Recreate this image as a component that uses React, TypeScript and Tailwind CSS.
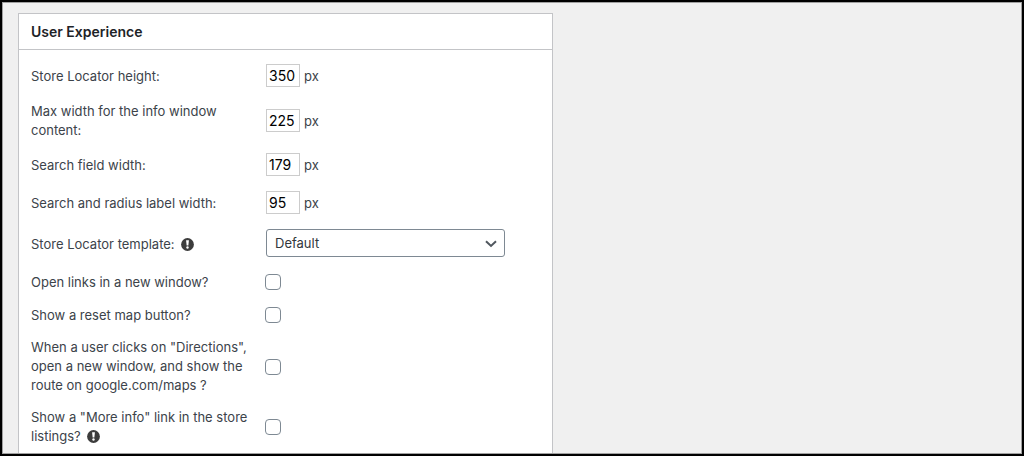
import { useState } from "react";
import type { ReactNode } from "react";

const sizeFields = [
  { id: "height", label: "Store Locator height:", value: "350" },
  { id: "infowindow_width", label: "Max width for the info window content:", value: "225" },
  { id: "search_width", label: "Search field width:", value: "179" },
  { id: "label_width", label: "Search and radius label width:", value: "95" },
];

const toggleFields = [
  { id: "new_window", label: "Open links in a new window?" },
  { id: "reset_map", label: "Show a reset map button?" },
  {
    id: "direction_redirect",
    label: 'When a user clicks on "Directions", open a new window, and show the route on google.com/maps ?',
  },
  { id: "more_info", label: 'Show a "More info" link in the store listings?', info: true },
];

const InfoIcon = () => (
  <svg className="inline-block w-[13px] h-[13px] ml-1.5 align-[-2px]" viewBox="0 0 12 12" aria-hidden="true">
    <circle cx="6" cy="6" r="5.9" fill="#3c3c3c" />
    <path d="M4.7 2.1h2.6L6.8 7H5.2z" fill="#fff" />
    <circle cx="6" cy="8.8" r="1.1" fill="#fff" />
  </svg>
);

type RowProps = {
  id: string;
  label: string;
  info?: boolean;
  children: ReactNode;
};

const Row = ({ id, label, info, children }: RowProps) => (
  <div className="flex items-center min-h-5">
    <label htmlFor={id} className="w-56 mr-[10px] shrink-0">
      {label}
      {info && <InfoIcon />}
    </label>
    {children}
  </div>
);

const App = () => {
  const [sizes, setSizes] = useState(sizeFields.map((f) => f.value));

  return (
    <div className="h-screen overflow-hidden border-2 border-black bg-[#f0f0f0] font-['Inter',sans-serif] text-[13px] leading-[19px] text-[#3c434a]">
      <main className="h-full overflow-hidden border border-[#a0a0a0] px-[15px] pt-[10px]">
        <section className="max-w-[535px] border border-[#c3c4c7] bg-white">
          <h2 className="border-b border-[#c3c4c7] px-3 py-2 text-sm leading-[19px] font-semibold text-[#1d2327]">
            User Experience
          </h2>
          <form className="flex flex-col gap-[13px] px-3 pt-[14px] pb-6">
            {sizeFields.map((field, i) => (
              <Row key={field.id} id={field.id} label={field.label}>
                <input
                  id={field.id}
                  type="text"
                  value={sizes[i]}
                  onChange={(e) => setSizes(sizes.map((s, n) => (n === i ? e.target.value : s)))}
                  className="ml-px mb-0.5 h-[23px] w-[34px] border border-[#ccc] bg-white px-0.5 text-sm text-black"
                />
                <span className="ml-1">px</span>
              </Row>
            ))}

            <Row id="template" label="Store Locator template:" info>
              <div className="relative ml-px mb-0.5 w-[239px]">
                <select
                  id="template"
                  className="block h-7 w-full appearance-none rounded-[3px] border border-[#7e8993] bg-white pl-2 pr-6 text-[#32373c]"
                >
                  <option>Default</option>
                  <option>Show the store list below the map</option>
                </select>
                <svg
                  className="pointer-events-none absolute right-2 top-[11px] h-2 w-3"
                  viewBox="0 0 12 8"
                  fill="none"
                  stroke="#50575e"
                  strokeWidth="2"
                  aria-hidden="true"
                >
                  <path d="M1 1.3l5 4.7 5-4.7" />
                </svg>
              </div>
            </Row>

            {toggleFields.map((field) => (
              <Row key={field.id} id={field.id} label={field.label} info={field.info}>
                <input
                  id={field.id}
                  type="checkbox"
                  className="h-4 w-4 appearance-none rounded border border-[#7e8993] bg-white checked:bg-[#2271b1]"
                />
              </Row>
            ))}
          </form>
        </section>
      </main>
    </div>
  );
};

export default App;
